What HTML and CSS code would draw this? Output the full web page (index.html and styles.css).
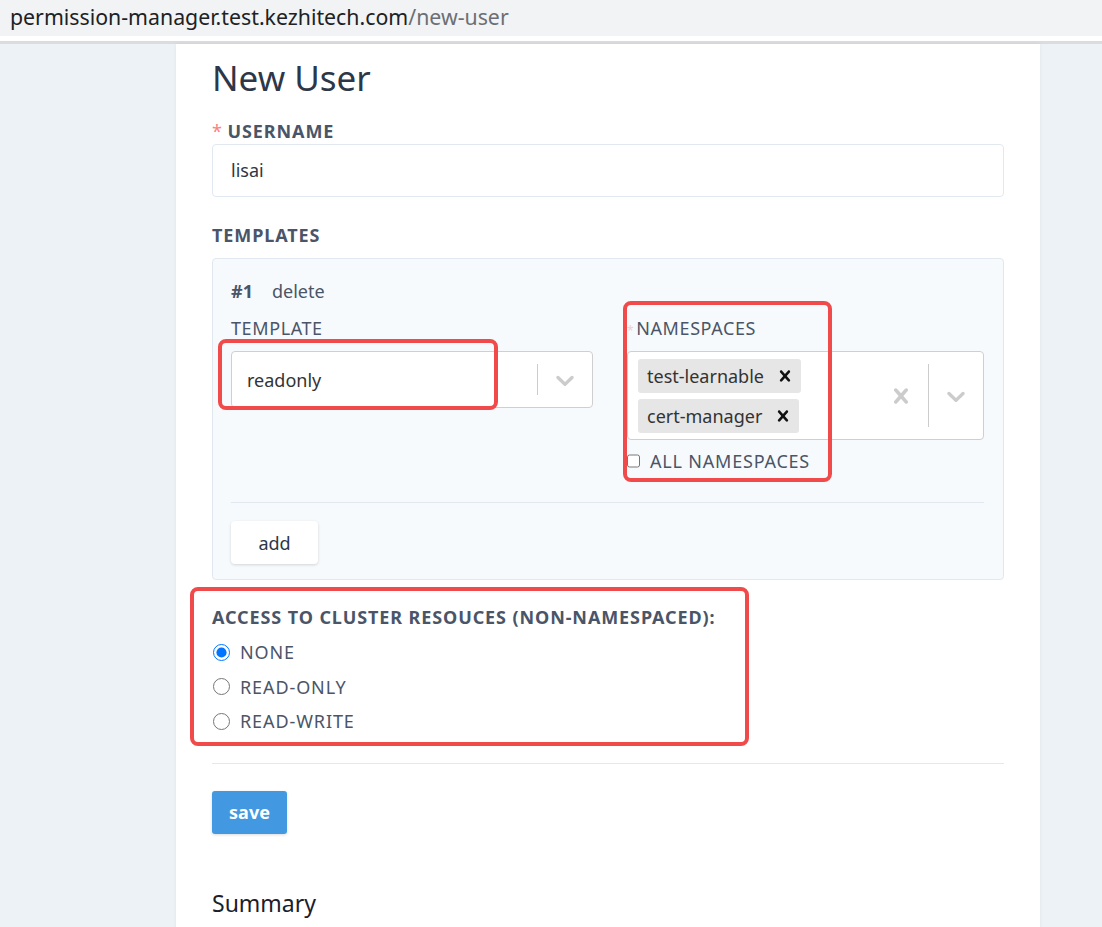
FILE: index.html
```html
<!DOCTYPE html>
<html lang="en">
<head>
<meta charset="utf-8">
<title>New User</title>
<link rel="stylesheet" href="styles.css">
</head>
<body>
<div class="urlbar"><span class="host">permission-manager.test.kezhitech.com</span><span class="path">/new-user</span></div>
<div class="urlbar-sep"></div>
<div class="page">
  <main class="card">
    <h1 class="title">New User</h1>

    <div class="field">
      <div class="label"><span class="req">*</span> USERNAME</div>
      <div class="input">lisai</div>
    </div>

    <div class="field">
      <div class="label">TEMPLATES</div>
      <div class="templates">
        <div class="tpl-head"><b>#1</b><span>delete</span></div>
        <div class="tpl-grid">
          <div class="col col-tpl">
            <div class="sublabel">TEMPLATE</div>
            <div class="select single">
              <div class="value">readonly</div>
              <span class="sep"></span>
              <div class="ind">
                <svg class="icon" viewBox="0 0 20 20"><path d="M4.516 7.548c0.436-0.446 1.043-0.481 1.576 0l3.908 3.747 3.908-3.747c0.533-0.481 1.141-0.446 1.574 0 0.436 0.445 0.408 1.197 0 1.615-0.406 0.418-4.695 4.502-4.695 4.502-0.217 0.223-0.502 0.335-0.787 0.335s-0.57-0.112-0.789-0.335c0 0-4.287-4.084-4.695-4.502s-0.436-1.17 0-1.615z" fill="currentColor"/></svg>
              </div>
            </div>
          </div>
          <div class="col col-ns">
            <div class="sublabel"><span class="req-faint">*</span>NAMESPACES</div>
            <div class="select multi">
              <div class="chips">
                <div class="chip"><span class="chip-label">test-learnable</span><span class="chip-x"><svg viewBox="0 0 20 20"><path d="M14.348 14.849c-0.469 0.469-1.229 0.469-1.697 0l-2.651-3.030-2.651 3.029c-0.469 0.469-1.229 0.469-1.697 0-0.469-0.469-0.469-1.229 0-1.697l2.758-3.15-2.759-3.152c-0.469-0.469-0.469-1.228 0-1.697s1.228-0.469 1.697 0l2.652 3.031 2.651-3.031c0.469-0.469 1.228-0.469 1.697 0s0.469 1.229 0 1.697l-2.758 3.152 2.758 3.15c0.469 0.469 0.469 1.229 0 1.698z" fill="currentColor"/></svg></span></div>
                <div class="chip"><span class="chip-label">cert-manager</span><span class="chip-x"><svg viewBox="0 0 20 20"><path d="M14.348 14.849c-0.469 0.469-1.229 0.469-1.697 0l-2.651-3.030-2.651 3.029c-0.469 0.469-1.229 0.469-1.697 0-0.469-0.469-0.469-1.229 0-1.697l2.758-3.15-2.759-3.152c-0.469-0.469-0.469-1.228 0-1.697s1.228-0.469 1.697 0l2.652 3.031 2.651-3.031c0.469-0.469 1.228-0.469 1.697 0s0.469 1.229 0 1.697l-2.758 3.152 2.758 3.15c0.469 0.469 0.469 1.229 0 1.698z" fill="currentColor"/></svg></span></div>
              </div>
              <div class="ind">
                <svg class="icon" viewBox="0 0 20 20"><path d="M14.348 14.849c-0.469 0.469-1.229 0.469-1.697 0l-2.651-3.030-2.651 3.029c-0.469 0.469-1.229 0.469-1.697 0-0.469-0.469-0.469-1.229 0-1.697l2.758-3.15-2.759-3.152c-0.469-0.469-0.469-1.228 0-1.697s1.228-0.469 1.697 0l2.652 3.031 2.651-3.031c0.469-0.469 1.228-0.469 1.697 0s0.469 1.229 0 1.697l-2.758 3.152 2.758 3.15c0.469 0.469 0.469 1.229 0 1.698z" fill="currentColor"/></svg>
              </div>
              <span class="sep"></span>
              <div class="ind">
                <svg class="icon" viewBox="0 0 20 20"><path d="M4.516 7.548c0.436-0.446 1.043-0.481 1.576 0l3.908 3.747 3.908-3.747c0.533-0.481 1.141-0.446 1.574 0 0.436 0.445 0.408 1.197 0 1.615-0.406 0.418-4.695 4.502-4.695 4.502-0.217 0.223-0.502 0.335-0.787 0.335s-0.57-0.112-0.789-0.335c0 0-4.287-4.084-4.695-4.502s-0.436-1.17 0-1.615z" fill="currentColor"/></svg>
              </div>
            </div>
            <label class="check"><input type="checkbox"> ALL NAMESPACES</label>
          </div>
        </div>
        <hr class="tpl-hr">
        <button class="btn-add" type="button">add</button>
      </div>
    </div>

    <div class="field access">
      <div class="label">ACCESS TO CLUSTER RESOUCES (NON-NAMESPACED):</div>
      <div class="radios">
        <label class="radio"><input type="radio" name="access" checked> NONE</label>
        <label class="radio"><input type="radio" name="access"> READ-ONLY</label>
        <label class="radio"><input type="radio" name="access"> READ-WRITE</label>
      </div>
    </div>

    <hr class="main-hr">
    <button class="btn-save" type="button">save</button>
    <h2 class="summary">Summary</h2>
  </main>
</div>

<div class="mark mark-tpl"></div>
<div class="mark mark-ns"></div>
<div class="mark mark-access"></div>
</body>
</html>
```

FILE: styles.css
```css
* { box-sizing: border-box; }
html, body { margin: 0; padding: 0; }
body {
  background: #edf2f7;
  font-family: "Noto Sans", "Open Sans", sans-serif;
  color: #4a5568;
  height: 927px;
  overflow: hidden;
  position: relative;
}

.urlbar {
  height: 36px;
  background: #f1f3f4;
  padding-left: 10px;
  font-size: 21.3px;
  line-height: 34px;
  color: #202124;
  white-space: nowrap;
}
.urlbar .path { color: #6b6f74; }
.urlbar-sep {
  height: 8px;
  background: #fff;
  border-bottom: 3px solid #dadce0;
}

.page {
  display: flex;
  padding-left: 176px;
}
.card {
  width: 864px;
  background: #fff;
  padding: 6px 36px 0 36px;
  box-shadow: 0 0 4px rgba(0,0,0,0.06);
  min-height: 900px;
}

.title {
  margin: 0;
  font-size: 35px;
  font-weight: 400;
  color: #2d3748;
  line-height: 56px;
}

.field { margin-top: 14px; }
.label {
  font-size: 18px;
  font-weight: 700;
  color: #4a5568;
  line-height: 23px;
  letter-spacing: 0.9px;
}
.req { color: #fc8181; font-weight: 400; letter-spacing: 0; }

.input {
  margin-top: 1px;
  height: 53px;
  border: 1px solid #e2e8f0;
  border-radius: 4px;
  padding: 0 18px;
  line-height: 51px;
  font-size: 18px;
  color: #2d3748;
}

.field + .field { margin-top: 27px; }

.templates {
  margin-top: 11px;
  background: #f7fafc;
  border: 1px solid #e2e8f0;
  border-radius: 4px;
  padding: 18px 19px 15px 18px;
}
.tpl-head {
  display: flex;
  gap: 19px;
  font-size: 18px;
  line-height: 28px;
  color: #4a5568;
}

.tpl-grid {
  display: flex;
  gap: 34px;
  margin-top: 11px;
}
.col-tpl { width: 362px; }
.col-ns { width: 357px; }
.sublabel {
  font-size: 18px;
  line-height: 24px;
  color: #4a5568;
  height: 35px;
  letter-spacing: 0.6px;
}
.req-faint { color: #ead2d2; font-size: 12px; margin-right: 2px; }

.select {
  background: #fff;
  border: 1px solid #cfcfcf;
  border-radius: 4px;
  display: flex;
  align-items: center;
}
.select.single { height: 57px; }
.select .value {
  flex: 1;
  padding-left: 15px;
  font-size: 18px;
  color: #333;
}
.ind {
  display: flex;
  align-items: center;
  padding: 0 12px;
  color: #cccccc;
}
.icon { width: 30px; height: 30px; display: block; }
.sep {
  width: 1.5px;
  align-self: stretch;
  margin: 12px 0;
  background: #cccccc;
}

.select.multi { height: 89px; }
.chips {
  flex: 1;
  padding: 6px 10px;
  display: flex;
  flex-direction: column;
  align-items: flex-start;
  gap: 6px;
}
.chip {
  display: flex;
  align-items: center;
  height: 34px;
  background: #e6e6e6;
  border-radius: 3px;
  font-size: 18px;
  color: #333;
}
.chip-label { padding: 0 4px 0 9px; }
.chip-x {
  display: flex;
  align-items: center;
  padding: 0 5px 0 6px;
  color: #111;
}
.chip-x svg { width: 22px; height: 22px; display: block; }

.check {
  display: flex;
  align-items: center;
  margin-top: 10px;
  font-size: 18px;
  line-height: 22px;
  color: #4a5568;
  letter-spacing: 0.8px;
}
.check input {
  margin: 0 10px 0 0;
  width: 13px;
  height: 14px;
}

.tpl-hr {
  border: 0;
  border-top: 1px solid #e2e8f0;
  margin: 30px 0 18px;
}
.btn-add {
  height: 43px;
  width: 87px;
  background: #fff;
  border: 0;
  border-radius: 4px;
  box-shadow: 0 1px 3px rgba(0,0,0,0.15);
  font-family: inherit;
  font-size: 18px;
  color: #2d3748;
  cursor: pointer;
}

.field.access { margin-top: 26px; }
.radios { margin-top: 6px; }
.radio {
  display: flex;
  align-items: center;
  font-size: 18px;
  color: #4a5568;
  height: 34.5px;
  letter-spacing: 0.9px;
}
.radio input {
  margin: 0 10px 0 1px;
  width: 17px;
  height: 17px;
}

.main-hr {
  border: 0;
  border-top: 1px solid #e2e8f0;
  margin: 24px 0 27px;
}
.btn-save {
  width: 75px;
  height: 43px;
  background: #4299e1;
  color: #fff;
  font-family: inherit;
  font-weight: 700;
  font-size: 18px;
  border: 0;
  border-radius: 3px;
  box-shadow: 0 1px 3px rgba(0,0,0,0.15);
  cursor: pointer;
}
.summary {
  margin: 53px 0 0;
  font-size: 23px;
  font-weight: 400;
  color: #1a202c;
}

.mark {
  position: absolute;
  border: 4px solid #f04a4a;
  border-radius: 8px;
  pointer-events: none;
}
.mark-tpl { left: 218px; top: 339px; width: 280px; height: 71px; }
.mark-ns { left: 623px; top: 301px; width: 209px; height: 181px; }
.mark-access { left: 190px; top: 587px; width: 559px; height: 159px; }
```
